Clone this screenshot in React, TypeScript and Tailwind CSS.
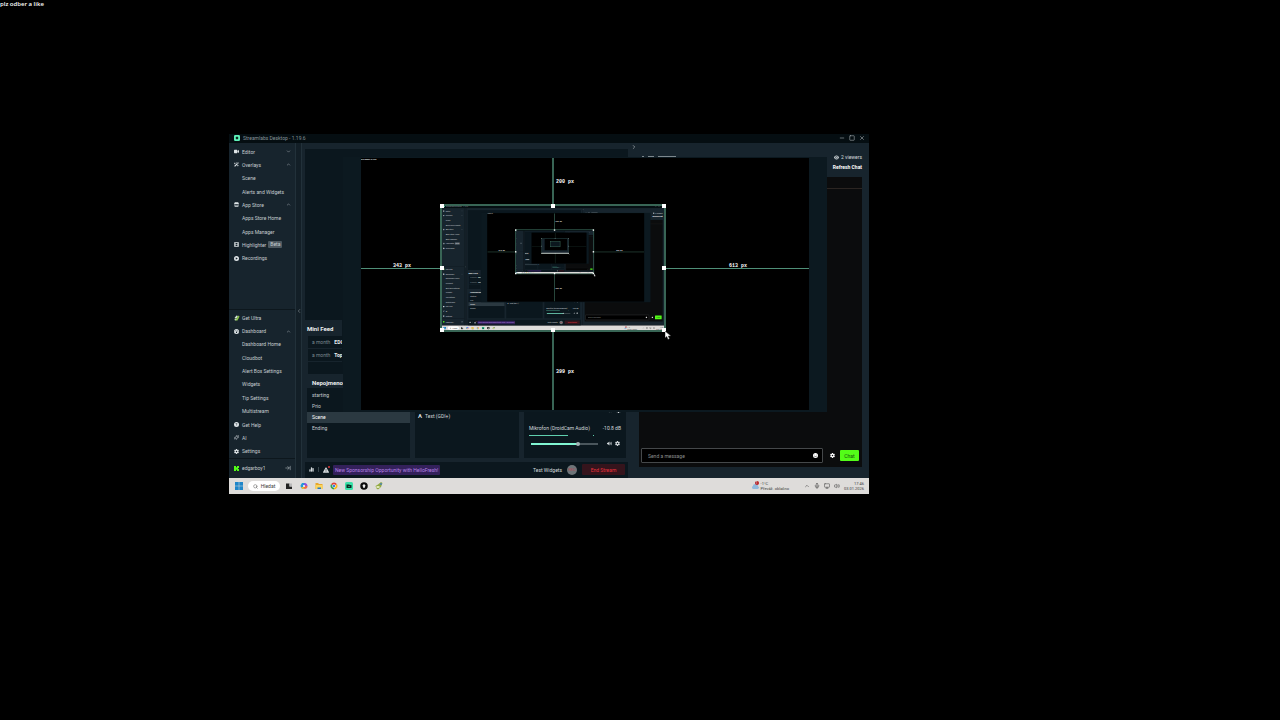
import clsx from 'clsx';
import type { ReactNode } from 'react';
import {
	FaChartSimple,
	FaCircleQuestion,
	FaCirclePlay,
	FaCloud,
	FaEye,
	FaFaceSmile,
	FaFilm,
	FaGear,
	FaGaugeHigh,
	FaStore,
	FaTriangleExclamation,
	FaVideo,
	FaVolumeHigh,
	FaWandMagicSparkles,
} from 'react-icons/fa6';
import {
	LuArrowRightToLine,
	LuChevronDown,
	LuChevronLeft,
	LuChevronRight,
	LuChevronUp,
	LuMic,
	LuMinus,
	LuMonitor,
	LuSearch,
	LuSparkles,
	LuSquare,
	LuVolume2,
	LuX,
} from 'react-icons/lu';

// How many times the captured desktop is fully drawn inside its own preview
const MAX_DEPTH = 3;

type NavEntry = {
	label: string;
	icon?: ReactNode;
	open?: boolean;
	badge?: string;
};

const topNav: NavEntry[] = [
	{ label: 'Editor', icon: <FaVideo />, open: false },
	{ label: 'Overlays', icon: <FaWandMagicSparkles />, open: true },
	{ label: 'Scene' },
	{ label: 'Alerts and Widgets' },
	{ label: 'App Store', icon: <FaStore />, open: true },
	{ label: 'Apps Store Home' },
	{ label: 'Apps Manager' },
	{ label: 'Highlighter', icon: <FaFilm />, badge: 'Beta' },
	{ label: 'Recordings', icon: <FaCirclePlay /> },
];

const bottomNav: NavEntry[] = [
	{ label: 'Get Ultra', icon: <UltraIcon /> },
	{ label: 'Dashboard', icon: <FaGaugeHigh />, open: true },
	{ label: 'Dashboard Home' },
	{ label: 'Cloudbot' },
	{ label: 'Alert Box Settings' },
	{ label: 'Widgets' },
	{ label: 'Tip Settings' },
	{ label: 'Multistream' },
	{ label: 'Get Help', icon: <FaCircleQuestion /> },
	{ label: 'AI', icon: <LuSparkles /> },
	{ label: 'Settings', icon: <FaGear /> },
];

function UltraIcon() {
	return (
		<svg viewBox="0 0 12 12" className="size-[6px]">
			<path d="M1 6 5 1l3 1-3 5z" fill="#d9e7dc" />
			<path d="M4 8 9 1l2 2-4 8H3z" fill="#8bc34a" />
			<circle cx="3" cy="9" r="2" fill="#b9d8a5" />
		</svg>
	);
}

function NavList({ items }: { items: NavEntry[] }) {
	return (
		<ul className="flex h-full flex-col">
			{items.map((item) => (
				<li key={item.label} className="flex flex-1 items-center">
					<button
						className={clsx(
							'flex w-full items-center pr-[4px] text-left',
							item.icon ? 'pl-[5px]' : 'pl-[13px]',
						)}
					>
						{item.icon && (
							<span className="flex w-[8px] shrink-0 text-[5px] text-[#dfe5e8]">
								{item.icon}
							</span>
						)}
						<span className="whitespace-nowrap">{item.label}</span>
						{item.badge && (
							<span className="ml-[2px] rounded-[1px] bg-[#4d5961] px-[2px] text-[5px] leading-[7px]">
								{item.badge}
							</span>
						)}
						{item.open !== undefined && (
							<span className="ml-auto text-[5px]">
								{item.open ? <LuChevronUp /> : <LuChevronDown />}
							</span>
						)}
					</button>
				</li>
			))}
		</ul>
	);
}

function TitleBar() {
	return (
		<header className="flex h-[9px] items-center bg-[#050e12] pr-[4px] pb-px pl-[5px]">
			<svg viewBox="0 0 10 10" className="size-[6px]">
				<rect width="10" height="10" rx="2" fill="#5ff0b8" />
				<rect x="3" y="3" width="4" height="4" rx="1" fill="#0b2a22" />
			</svg>
			<h1 className="ml-[3px] text-[#87949a]">Streamlabs Desktop - 1.19.6</h1>
			<div className="ml-auto flex gap-[4px] text-[6px] text-[#c3c9cc]">
				<button aria-label="Minimize">
					<LuMinus />
				</button>
				<button aria-label="Maximize">
					<LuSquare />
				</button>
				<button aria-label="Close">
					<LuX />
				</button>
			</div>
		</header>
	);
}

function Sidebar() {
	return (
		<>
			<nav className="flex w-[67px] flex-col border-r border-[#22313a] bg-[#17242d] text-[#c5ccd0]">
				<div className="mt-[2px] h-[120px]">
					<NavList items={topNav} />
				</div>
				<div className="mt-auto h-[149px] border-t border-[#0d171d] pt-px">
					<NavList items={bottomNav} />
				</div>
				<div className="flex h-[20px] items-center border-t border-[#0d171d] pr-[4px] pb-px pl-[5px]">
					<svg viewBox="0 0 10 10" className="size-[5px]">
						<path
							d="M0 0h4v3h1V2h1V0h4v4H8v2h2v4H6V8H5V7H4v3H0z"
							fill="#53fc18"
						/>
					</svg>
					<span className="ml-[3px]">edgarboy1</span>
					<button aria-label="Log out" className="ml-auto text-[6px]">
						<LuArrowRightToLine />
					</button>
				</div>
			</nav>
			<div className="flex w-[6px] items-center justify-center border-r border-[#22313a] bg-[#131f27]">
				<button
					aria-label="Collapse navigation"
					className="text-[6px] text-[#9aa4a9]"
				>
					<LuChevronLeft />
				</button>
			</div>
		</>
	);
}

function MiniFeed() {
	const rows = ['EDG', 'Top'];

	return (
		<section className="mt-auto h-[54px] w-[37px] overflow-hidden bg-[#17242d]">
			<h2 className="h-[16px] pl-[2px] text-[6px] leading-[18px] font-bold whitespace-nowrap text-[#eceff0]">
				Mini Feed
			</h2>
			<ul className="flex flex-col gap-px pl-[3px]">
				{rows.map((row) => (
					<li
						key={row}
						className="flex h-[12px] items-center gap-[4px] bg-[#0b171e] pl-[4px] whitespace-nowrap"
					>
						<span className="text-[#7b888e]">a month</span>
						<b className="text-[#eceff0]">{row}</b>
					</li>
				))}
				<li className="h-[12px] bg-[#0b171e]" />
			</ul>
		</section>
	);
}

function Scenes() {
	return (
		<section className="flex w-[105px] flex-col">
			<h2 className="h-[14px] w-[37px] bg-[#17242d] pl-[7px] text-[6px] leading-[18px] font-bold whitespace-nowrap text-[#eceff0]">
				Nepojmenov
			</h2>
			<ul className="ml-[2px] flex-1 bg-[#0b171e] pt-[2px] text-[#c5ccd0]">
				{['starting', 'Prio', 'Scene', 'Ending'].map((scene) => (
					<li
						key={scene}
						className={clsx(
							'h-[11px] pl-[5px] leading-[11px]',
							scene === 'Scene' && 'bg-[#2b3941] text-white',
						)}
					>
						{scene}
					</li>
				))}
			</ul>
		</section>
	);
}

function Mixer() {
	return (
		<section className="mt-[14px] flex w-[102px] flex-col bg-[#0b171e] px-[5px] pt-[20px] text-[#d4dadd]">
			<div className="flex h-[5px] items-center justify-end gap-[4px] text-[5px]">
				<FaVolumeHigh />
				<FaGear />
			</div>
			<div className="mt-[12px] flex justify-between leading-[6px] whitespace-nowrap">
				<span>Mikrofon (DroidCam Audio)</span>
				<span>-10.8 dB</span>
			</div>
			<div className="mt-[4px] flex h-px justify-between pr-[27px]">
				<span className="w-[39px] bg-[#5fcfae]" />
				<span className="w-px bg-[#5fcfae]" />
			</div>
			<div className="mt-[5px] flex items-center gap-[3px] text-[5px]">
				<input
					type="range"
					aria-label="Microphone volume"
					defaultValue={72}
					className="mr-[6px] ml-[2px] h-[4px] w-[67px] appearance-none bg-[linear-gradient(to_right,#80f5d2_72%,#4a565c_72%)] bg-[length:100%_2px] bg-center bg-no-repeat [&::-webkit-slider-thumb]:size-[4px] [&::-webkit-slider-thumb]:appearance-none [&::-webkit-slider-thumb]:rounded-full [&::-webkit-slider-thumb]:bg-[#a3b3b5]"
				/>
				<button aria-label="Mute">
					<FaVolumeHigh />
				</button>
				<button aria-label="Source settings">
					<FaGear />
				</button>
			</div>
		</section>
	);
}

function StatusBar() {
	return (
		<footer className="mr-[4px] flex h-[16px] items-center bg-[#0b171e] pr-[3px] pb-px pl-[4px] text-[#d4dadd]">
			<FaChartSimple className="text-[5px]" />
			<span className="mx-[4px] h-[5px] w-px bg-[#3a474e]" />
			<span className="relative text-[6px]">
				<FaTriangleExclamation />
				<i className="absolute -top-px -right-px size-[2px] rounded-full bg-[#e03a3a]" />
			</span>
			<button className="ml-[4px] h-[10px] rounded-[1px] bg-[#33205a] px-[2px] whitespace-nowrap text-[#b884e6]">
				New Sponsorship Opportunity with HelloFresh!
			</button>
			<button className="ml-auto whitespace-nowrap">Test Widgets</button>
			<button className="mx-[5px] size-[10px] rounded-full bg-[#6d7478] text-center text-[4px] leading-[10px] text-[#b54a55]">
				REC
			</button>
			<button className="h-[11px] w-[43px] rounded-[1px] bg-[#35141c] text-[#e8323c]">
				End Stream
			</button>
		</footer>
	);
}

function Chat() {
	return (
		<aside className="flex w-[237px] flex-col bg-[#17242d] px-[7px] text-[#d4dadd]">
			<div className="flex h-[34px] flex-col items-end">
				<button
					aria-label="Collapse chat"
					className="mt-px -ml-[8px] self-start text-[6px]"
				>
					<LuChevronRight />
				</button>
				<div className="mt-[4px] flex w-full gap-[4px] pl-[3px]">
					<i className="mt-[2px] h-px w-[2px] bg-[#7d888e]" />
					<i className="mt-[2px] h-px w-[6px] bg-[#7d888e]" />
					<i className="mt-[2px] h-px w-[18px] bg-[#7d888e]" />
					<p className="ml-auto flex items-center gap-[2px] leading-[7px]">
						<FaEye /> 2 viewers
					</p>
				</div>
				<button className="mt-[3px] leading-[7px] font-bold text-white">
					Refresh Chat
				</button>
			</div>
			<div className="h-[12px] border-b border-[#2b2522] bg-[#0b0c0d]" />
			<form
				className="mb-[11px] flex flex-1 items-end bg-[#0b0c0d] pr-[3px] pb-[4px] pl-[2px]"
				onSubmit={(e) => e.preventDefault()}
			>
				<label className="flex h-[15px] w-[182px] items-center rounded-[1px] border border-[#45484a] bg-black pr-[4px] pl-[6px]">
					<input
						type="text"
						aria-label="Chat message"
						placeholder="Send a message"
						className="min-w-0 flex-1 outline-none placeholder:text-[#8a8d8f]"
					/>
					<FaFaceSmile className="text-[5px] text-white" />
				</label>
				<span className="ml-auto flex h-[15px] items-center gap-[5px]">
					<button
						type="button"
						aria-label="Chat settings"
						className="text-[5px] text-white"
					>
						<FaGear />
					</button>
					<button className="h-[11px] w-[19px] rounded-[1px] bg-[#53fc18] text-[#14500a]">
						Chat
					</button>
				</span>
			</form>
		</aside>
	);
}

function Handle({ className }: { className: string }) {
	return <i className={clsx('absolute size-[4px] bg-white', className)} />;
}

// Bounding box and distance guides drawn over the selected source
function Selection() {
	const label =
		'absolute font-["Liberation_Mono"] whitespace-nowrap leading-[5px] font-bold text-white';

	return (
		<>
			<i className="absolute top-0 left-[191px] h-[47px] w-[2px] bg-[#386555]" />
			<i className="absolute top-[173px] bottom-0 left-[191px] w-[2px] bg-[#386555]" />
			<i className="absolute top-[110px] left-0 h-px w-[80px] bg-[#4f8f78]" />
			<i className="absolute top-[110px] right-0 left-[304px] h-px bg-[#4f8f78]" />
			<span className={clsx(label, 'top-[22px] left-[195px]')}>200 px</span>
			<span className={clsx(label, 'top-[212px] left-[195px]')}>399 px</span>
			<span className={clsx(label, 'top-[106px] left-[32px]')}>343 px</span>
			<span className={clsx(label, 'top-[106px] left-[368px]')}>613 px</span>
			<div className="absolute top-[46px] left-[79px] h-[128px] w-[226px] border-2 border-[#386555]">
				<Handle className="-top-[2px] -left-[2px]" />
				<Handle className="-top-[2px] left-[109px]" />
				<Handle className="-top-[2px] -right-[2px]" />
				<Handle className="top-[60px] -left-[2px]" />
				<Handle className="top-[60px] -right-[2px]" />
				<Handle className="-bottom-[2px] -left-[2px]" />
				<Handle className="-bottom-[2px] left-[109px]" />
				<Handle className="-right-[2px] -bottom-[2px]" />
			</div>
		</>
	);
}

// Stand-in for the desktop once it gets too small to read
function DesktopThumbnail() {
	return (
		<svg viewBox="0 0 1280 720" className="size-full">
			<rect width="1280" height="720" fill="#000" />
			<rect x="229" y="134" width="640" height="344" fill="#17242d" />
			<rect x="305" y="149" width="522" height="262" fill="#000" />
			<rect
				x="441"
				y="205"
				width="224"
				height="126"
				fill="#0b171e"
				stroke="#4f8f78"
				strokeWidth="8"
			/>
			<rect x="229" y="470" width="640" height="24" fill="#dedcda" />
		</svg>
	);
}

function Preview({ depth }: { depth: number }) {
	return (
		<div className="absolute top-[14px] left-[114px] flex h-[255px] w-[484px] justify-center bg-[#0c1920] pt-px">
			<div className="relative h-[252px] w-[448px] overflow-hidden bg-black">
				{depth < MAX_DEPTH ? (
					<div className="h-[720px] w-[1280px] origin-top-left scale-[.35]">
						<Scene depth={depth + 1} />
					</div>
				) : (
					<DesktopThumbnail />
				)}
				<Selection />
			</div>
		</div>
	);
}

function Taskbar() {
	return (
		<footer className="flex h-[16px] items-center bg-[#dedcda] pr-[5px] pl-[6px] text-[#3c3c3c]">
			<button aria-label="Start">
				<svg viewBox="0 0 16 16" className="size-[8px]">
					<path
						d="M0 0h7.5v7.5H0zM8.5 0H16v7.5H8.5zM0 8.5h7.5V16H0zM8.5 8.5H16V16H8.5z"
						fill="#1f86c9"
					/>
				</svg>
			</button>
			<button className="mx-[5px] flex h-[10px] w-[32px] items-center justify-center gap-[3px] rounded-full bg-white">
				<LuSearch /> Hledat
			</button>
			<div className="flex gap-[7px]">
				<svg viewBox="0 0 16 16" className="size-[8px]">
					<path d="M2 3h7v6h5v5H2z" fill="#222" />
					<path d="M9 3h5v6H9z" fill="#b9b9b9" />
				</svg>
				<svg viewBox="0 0 16 16" className="size-[8px]">
					<path d="M4 2h6l2 5-5 7-5-2-1-5z" fill="#1f9bd8" />
					<path d="M9 2c4 0 6 3 6 6l-5 1-3-3z" fill="#8c4de0" />
					<path d="M15 8c0 4-2 6-6 6l-2-2 3-5z" fill="#ef6a4a" />
					<path d="M2 10h5l2 4H5z" fill="#f2bd2c" />
					<circle cx="8" cy="8" r="2" fill="#fff" />
				</svg>
				<svg viewBox="0 0 16 16" className="size-[8px]">
					<path d="M1 2h5l2 2h7v10H1z" fill="#e8a72b" />
					<path d="M1 6h14v8H1z" fill="#fbd55c" />
					<path d="M5 11h7v3H5z" fill="#2779c4" />
				</svg>
				<svg viewBox="0 0 16 16" className="size-[8px]">
					<path d="M8 8 2 4.5a7 7 0 0 1 12 0z" fill="#e34335" />
					<path d="M8 8 2 4.5A7 7 0 0 0 8 15z" fill="#32a350" />
					<path d="M8 8v7a7 7 0 0 0 6-10.500z" fill="#f8bc15" />
					<circle cx="8" cy="8" r="3.5" fill="#fff" />
					<circle cx="8" cy="8" r="2.5" fill="#3b7de8" />
				</svg>
				<svg viewBox="0 0 16 16" className="size-[8px]">
					<rect width="16" height="16" rx="3" fill="#3be0a8" />
					<path d="M3 5h6v1h4v6H3z" fill="#0a2b23" />
					<path d="M6 8h1v2H6zM9 8h1v2H9z" fill="#3be0a8" />
				</svg>
				<svg viewBox="0 0 16 16" className="size-[8px]">
					<circle cx="8" cy="8" r="7.5" fill="#0c0c0c" />
					<path d="M8 4 11 7 9 12H7L5 7z" fill="#eee" />
				</svg>
				<svg viewBox="0 0 16 16" className="size-[8px]">
					<path d="M1 8 6 5 12 0l3 2-3 8-6 5-3-2z" fill="#92a943" />
					<path d="M3 8h6v4H3z" fill="#dfe6b5" />
					<circle cx="12" cy="4" r="2" fill="#4b86b0" />
				</svg>
			</div>
			<button className="ml-auto flex items-center gap-[2px] text-left text-[4px] leading-[5px] whitespace-nowrap">
				<span className="relative text-[7px] text-[#8fb9dd]">
					<FaCloud />
					<i className="absolute -top-[2px] right-0 size-[4px] rounded-full bg-[#b3202a] text-center text-[3px] leading-[4px] text-white not-italic">
						1
					</i>
				</span>
				<span>
					-1°C
					<br />
					Převáž. oblačno
				</span>
			</button>
			<div className="ml-[15px] flex items-center gap-[4px] text-[6px]">
				<LuChevronUp />
				<LuMic />
				<LuMonitor />
				<LuVolume2 />
			</div>
			<time className="ml-[4px] text-right text-[4px] leading-[5px]">
				17:46
				<br />
				03.01.2026
			</time>
		</footer>
	);
}

function Desktop({ depth }: { depth: number }) {
	return (
		<div className="relative flex h-[360px] w-[640px] flex-col text-[5px] leading-[6px]">
			<TitleBar />
			<div className="relative flex min-h-0 flex-1">
				<Sidebar />
				<main className="flex min-w-0 flex-1 flex-col bg-[#17242d] pt-[6px] pl-[3px]">
					<div className="mr-[4px] flex h-[225px] flex-col bg-[#0b171e]">
						<MiniFeed />
					</div>
					<div className="mr-[6px] flex min-h-0 flex-1 gap-[5px] pb-[4px]">
						<Scenes />
						<section className="mt-[14px] flex-1 bg-[#0b171e] pt-[25px] pl-[3px] text-[#d4dadd]">
							<p className="flex items-center gap-[3px]">
								<b className="text-[6px]">A</b> Text (GDI+)
							</p>
						</section>
						<Mixer />
					</div>
					<StatusBar />
				</main>
				<Chat />
				<Preview depth={depth} />
			</div>
			<Taskbar />
			<svg
				viewBox="0 0 12 18"
				className="absolute top-[197px] left-[436px] h-[9px] w-[6px]"
			>
				<path
					d="M0 0v14l3.5-3 2.5 6 3-1.5L6.5 10H12z"
					fill="#fff"
					stroke="#222"
					strokeWidth="1"
				/>
			</svg>
		</div>
	);
}

function Scene({ depth }: { depth: number }) {
	return (
		<div className="relative h-full bg-black">
			<p className="font-['Open_Sans'] text-[6px] leading-[8px] font-semibold text-white">
				plz odber a like
			</p>
			<div className="absolute top-[134px] left-[229px]">
				<Desktop depth={depth} />
			</div>
		</div>
	);
}

export default function App() {
	return (
		<div className="h-screen overflow-hidden bg-black font-[Roboto,sans-serif]">
			<Scene depth={1} />
		</div>
	);
}
